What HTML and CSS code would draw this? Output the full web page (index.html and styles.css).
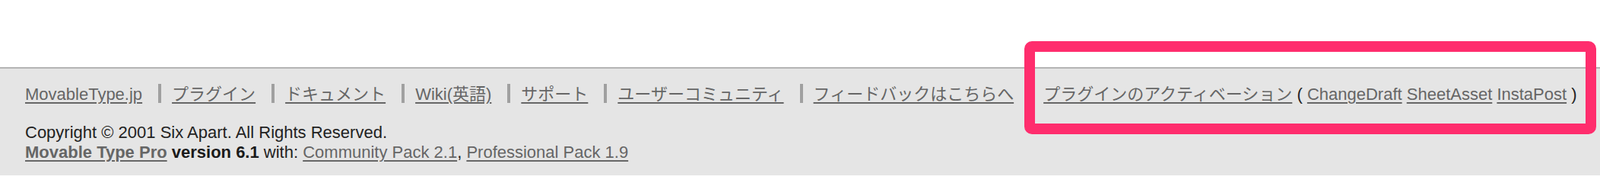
FILE: index.html
```html
<!DOCTYPE html>
<html lang="ja">
<head>
<meta charset="utf-8">
<title>Footer</title>
<link rel="stylesheet" href="styles.css">
</head>
<body>
<div class="page">
  <div class="spacer"></div>
  <footer class="footer">
    <ul class="nav">
      <li><a href="#">MovableType.jp</a></li>
      <li><a href="#">プラグイン</a></li>
      <li><a href="#">ドキュメント</a></li>
      <li><a href="#">Wiki(英語)</a></li>
      <li><a href="#">サポート</a></li>
      <li><a href="#">ユーザーコミュニティ</a></li>
      <li><a href="#">フィードバックはこちらへ</a></li>
      <li><a href="#">プラグインのアクティベーション</a> ( <a href="#">ChangeDraft</a> <a href="#">SheetAsset</a> <a href="#">InstaPost</a> )</li>
    </ul>
    <div class="copyright">
      <p class="line">Copyright © 2001 Six Apart. All Rights Reserved.</p>
      <p class="line"><a href="#" class="strong">Movable Type Pro</a> <b>version 6.1</b> with: <a href="#">Community Pack 2.1</a>, <a href="#">Professional Pack 1.9</a></p>
    </div>
  </footer>
  <div class="highlight"></div>
</div>
</body>
</html>
```

FILE: styles.css
```css
html, body {
  margin: 0;
  padding: 0;
  background: #ffffff;
}

body {
  font-family: "Liberation Sans", "Noto Sans CJK JP", sans-serif;
  font-size: 22px;
  color: #222222;
}

.page {
  position: relative;
  width: 2104px;
  height: 230px;
  overflow: hidden;
}

.spacer {
  height: 88px;
}

.footer {
  border-top: 2px solid #b4b4b4;
  background: #e5e5e5;
  padding: 20px 32px 20px 33px;
  height: 140px;
}

.footer a {
  color: #666666;
  text-decoration: underline;
  text-decoration-thickness: 2px;
  text-underline-offset: 3px;
}

.nav {
  list-style: none;
  margin: 0;
  padding: 0;
  display: flex;
  white-space: nowrap;
}

.nav li {
  padding-top: 2px;
  line-height: 23px;
  height: 23px;
}

.nav li + li {
  margin-left: 21px;
  padding-left: 14px;
  border-left: 4px solid #a0a0a0;
}

.copyright {
  margin-top: 26px;
}

.line {
  margin: 0;
  line-height: 26px;
  white-space: nowrap;
}

.strong {
  font-weight: bold;
}

.line b {
  font-weight: bold;
  color: #1a1a1a;
}

.highlight {
  position: absolute;
  left: 1347px;
  top: 54px;
  width: 724px;
  height: 94px;
  border: 14px solid #ff2d6d;
  border-radius: 10px;
}
```
